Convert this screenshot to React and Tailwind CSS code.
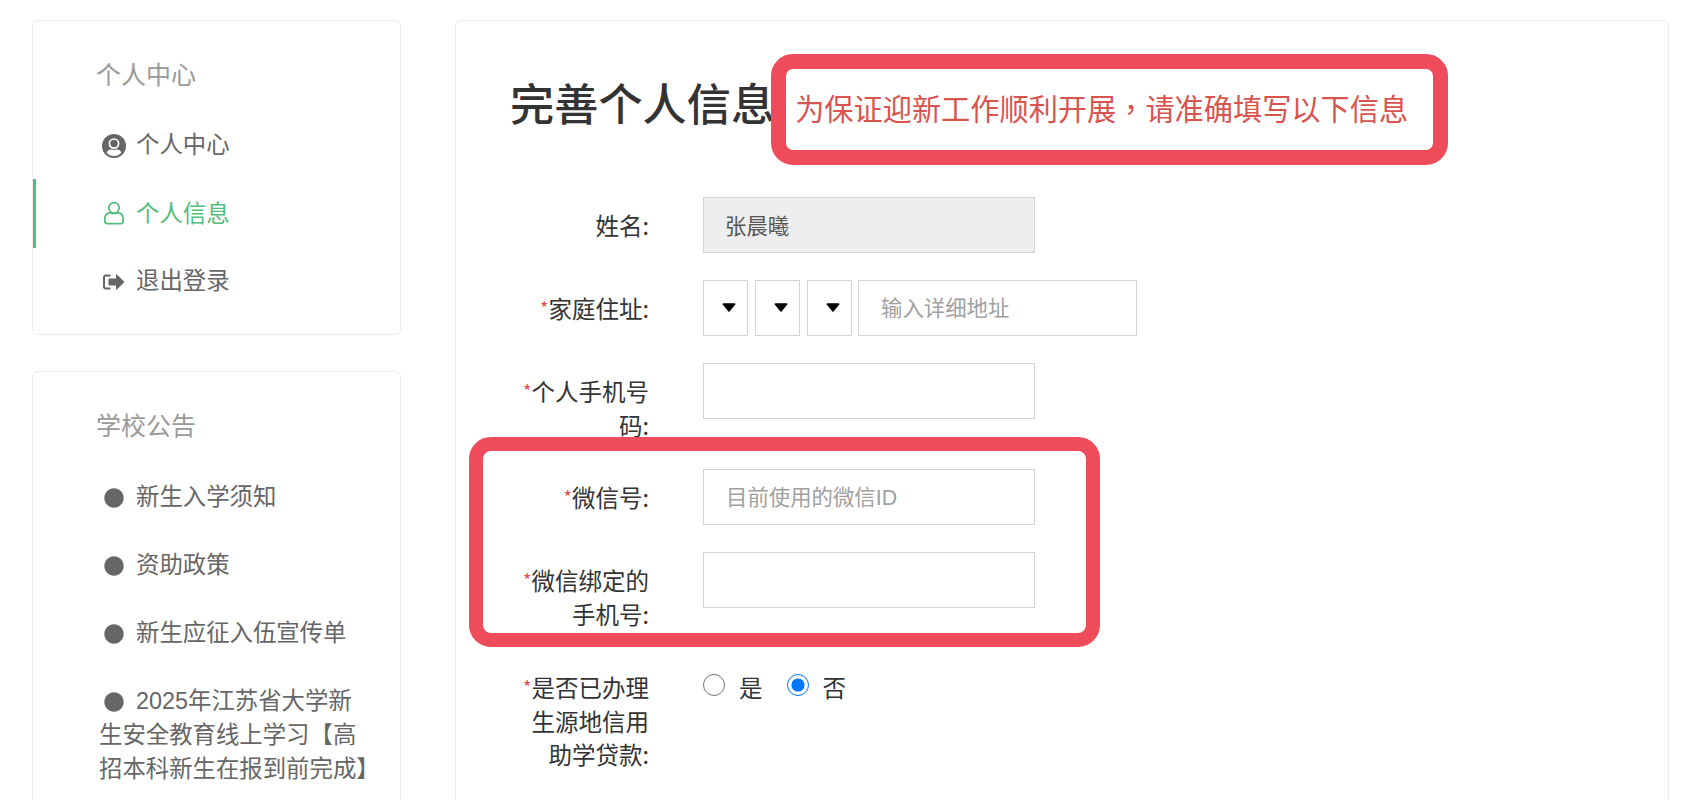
import React from "react";
import { FaCircle } from "react-icons/fa";

function Label({ req, children }) {
  return (
    <div className="w-[135px] ml-[3px] mr-[54px] shrink-0 pt-[12px] text-right text-[23.5px] leading-[33.5px] text-[#333] font-['Noto_Sans_CJK_SC',sans-serif]">
      {req && <span className="text-[#e04b3f] text-[18px] leading-[0] align-[3px]">*</span>}
      {children}
    </div>
  );
}
const inputCls = "block w-[332px] h-[56px] border border-[#d4d4d4] px-[22px] text-[21.4px] text-[#555] placeholder:text-[#a0a0a0] outline-none bg-white";

function Sel() {
  return (
    <div className="w-[45px] h-[56px] border border-[#d4d4d4] flex items-center justify-center pl-[7px] pb-[2px]">
      <svg width="14" height="9" viewBox="0 0 14 9"><path d="M0.5 1.2 Q0.5 0.3 1.5 0.3 H12.5 Q13.5 0.3 13.5 1.2 L7.6 8.4 Q7 9 6.4 8.4 Z" fill="#000" /></svg>
    </div>
  );
}

function UserDisc() {
  return (
    <svg width="24" height="24" viewBox="0 0 24 24" className="shrink-0">
      <circle cx="12" cy="12" r="12" fill="#666" />
      <circle cx="12" cy="9.6" r="4.6" fill="#666" stroke="#fff" strokeWidth="1.7" />
      <path d="M4.6 18.4 C6 15.9 8.4 15.4 9.6 15.6 C11.2 16.2 12.8 16.2 14.4 15.6 C15.6 15.4 18 15.9 19.4 18.4 C17.6 20.6 15 22 12 22 C9 22 6.4 20.6 4.6 18.4 Z" fill="#fff" />
    </svg>
  );
}
function UserOutline() {
  return (
    <svg width="24" height="24" viewBox="0 0 24 24" className="shrink-0 mb-[3px]" fill="none" stroke="#52bd7d" strokeWidth="1.7">
      <circle cx="12" cy="6.8" r="5.2" />
      <path d="M8.2 11.6 C5 12.2 2.8 14.2 2.8 17.4 V20 C2.8 21.6 3.8 22.6 5.4 22.6 H18.6 C20.2 22.6 21.2 21.6 21.2 20 V17.4 C21.2 14.2 19 12.2 15.8 11.6 C13.4 12.6 10.6 12.6 8.2 11.6 Z" strokeLinejoin="round" />
    </svg>
  );
}
function Logout() {
  return (
    <svg width="24" height="24" viewBox="0 0 24 24" className="shrink-0">
      <path d="M8.5 5.5 H4 A2 2 0 0 0 2 7.5 V16.5 A2 2 0 0 0 4 18.5 H8.5" fill="none" stroke="#666" strokeWidth="2" />
      <path d="M6.5 9.2 Q6.5 8.4 7.4 8.4 H14 V4.6 Q14 3.8 14.8 4.4 L21.8 11.2 Q22.5 12 21.8 12.8 L14.8 19.6 Q14 20.2 14 19.4 V15.6 H7.4 Q6.5 15.6 6.5 14.8 Z" fill="#666" />
    </svg>
  );
}

const notices = [
  ["新生入学须知"],
  ["资助政策"],
  ["新生应征入伍宣传单"],
  ["2025年江苏省大学新", "生安全教育线上学习【高", "招本科新生在报到前完成】"],
];

export default function App() {
  return (
    <div className="relative h-[800px] overflow-hidden bg-white flex pl-[32px] pt-[20px] font-['Liberation_Sans','Noto_Sans_CJK_SC',sans-serif]">
      <aside className="w-[369px] shrink-0">
        <div className="border border-[#e8ebf0] rounded-[6px] pb-[18px]">
          <div className="h-[90px] pl-[63px] pt-[36px] text-[25px] leading-[36px] text-[#999]">个人中心</div>
          <div className="h-[68px] pl-[69px] pt-[2px] flex items-center text-[23.4px] text-[#666] gap-[10px]">
            <UserDisc />个人中心
          </div>
          <div className="h-[69px] pl-[66px] pt-[2px] flex items-center text-[23.4px] text-[#52bd7d] gap-[10px] border-l-[3px] border-[#52bd7d]">
            <UserOutline />个人信息
          </div>
          <div className="h-[68px] pl-[69px] flex items-center text-[23.4px] text-[#666] gap-[10px]">
            <Logout />退出登录
          </div>
        </div>
        <div className="mt-[36px] border border-[#e8ebf0] rounded-[6px] h-[600px]">
          <div className="h-[90px] pl-[63px] pt-[36px] text-[25px] leading-[36px] text-[#999]">学校公告</div>
          <div className="pl-[66px] pr-[5px] pt-[1px] text-[23.4px] leading-[34px] text-[#666]">
            {notices.map((lines) => (
              <div key={lines[0]} className="py-[17px] whitespace-nowrap">
                <FaCircle className="inline-block w-[20px] h-[20px] ml-[5px] mr-[12px] align-[-3px]" />
                {lines.map((l, i) => (
                  <React.Fragment key={l}>{i > 0 && <br />}{l}</React.Fragment>
                ))}
              </div>
            ))}
          </div>
        </div>
      </aside>

      <main className="ml-[54px] w-[1214px] h-[900px] shrink-0 border border-[#e8ebf0] rounded-[6px] pl-[55px]">
        <div className="pt-[55px] h-[176px] flex items-start">
          <h1 className="-ml-[1px] text-[44.2px] leading-[60px] font-medium text-[#333]">完善个人信息</h1>
          <span className="ml-[20px] mt-[11px] text-[29.2px] leading-[40px] text-[#d9534f]">为保证迎新工作顺利开展<span className="font-['Noto_Sans_CJK_TC',sans-serif]">，</span>请准确填写以下信息</span>
        </div>

        <div className="flex mb-[27px]">
          <Label>姓名:</Label>
          <input readOnly value="张晨曦" className={inputCls + " !bg-[#eeeeee] pb-[2px] !pl-[21px]"} />
        </div>
        <div className="flex mb-[27px]">
          <Label req>家庭住址:</Label>
          <div className="flex gap-[7px]">
            <Sel /><Sel /><Sel />
            <input placeholder="输入详细地址" className={inputCls + " !w-[279px] -ml-[1px] pt-[2px]"} />
          </div>
        </div>
        <div className="flex mb-[27px]">
          <Label req>个人手机号码:</Label>
          <input className={inputCls} />
        </div>
        <div className="flex mb-[27px]">
          <Label req>微信号:</Label>
          <input placeholder="目前使用的微信ID" className={inputCls + " pt-[2px]"} />
        </div>
        <div className="flex mb-[28px]">
          <Label req>微信绑定的手机号:</Label>
          <input className={inputCls} />
        </div>
        <div className="flex">
          <Label req>是否已办理生源地信用助学贷款:</Label>
          <div className="flex items-center h-[58px] text-[23.5px] text-[#333] font-['Noto_Sans_CJK_SC',sans-serif]">
            <input type="radio" name="loan" className="w-[22px] h-[22px] m-0 mb-[6px]" />
            <span className="ml-[14px]">是</span>
            <input type="radio" name="loan" defaultChecked className="w-[22px] h-[22px] m-0 ml-[24px] mb-[6px]" />
            <span className="ml-[14px]">否</span>
          </div>
        </div>
      </main>

      <div className="absolute left-[771px] top-[54px] w-[677px] h-[111px] border-[15px] border-[#ee4b5b] rounded-[22px]" />
      <div className="absolute left-[469px] top-[437px] w-[631px] h-[210px] border-[14px] border-[#ee4b5b] rounded-[22px]" />
    </div>
  );
}
